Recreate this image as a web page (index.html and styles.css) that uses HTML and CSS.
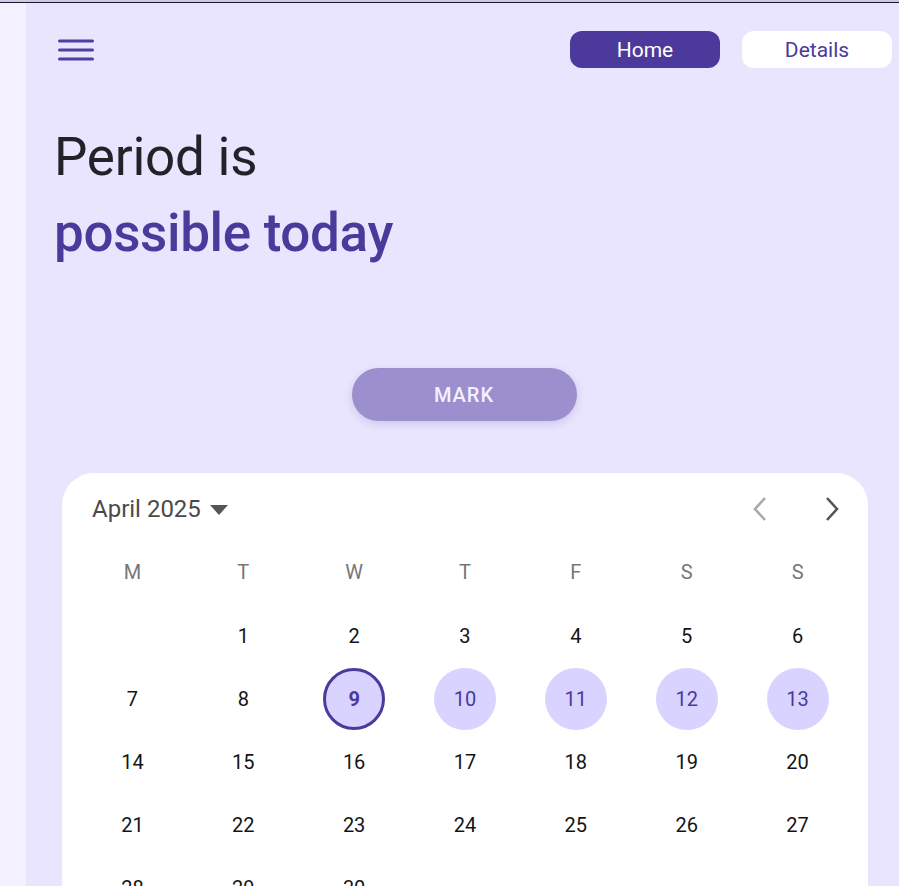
FILE: index.html
```html
<!DOCTYPE html>
<html>
<head>
<meta charset="utf-8">
<link rel="stylesheet" href="styles.css">
</head>
<body>
<div class="topline"></div>
<div class="app">
  <aside class="side"></aside>
  <main class="main">
    <header class="header">
      <svg class="menu" width="36" height="24" viewBox="0 0 36 24"><g stroke="#4e3fa0" stroke-width="3" stroke-linecap="round"><line x1="1.5" y1="3" x2="34.5" y2="3"/><line x1="1.5" y1="12" x2="34.5" y2="12"/><line x1="1.5" y1="21" x2="34.5" y2="21"/></g></svg>
      <nav class="tabs">
        <button class="tab tab-active">Home</button>
        <button class="tab">Details</button>
      </nav>
    </header>
    <h1 class="title"><span class="t1">Period is</span><span class="t2">possible today</span></h1>
    <div class="mark-wrap"><button class="mark">MARK</button></div>
    <section class="card">
      <div class="cal-head">
        <div class="month">April 2025 <svg class="caret" width="18" height="10" viewBox="0 0 18 10"><path d="M0 0H18L9 10Z" fill="#555"/></svg></div>
        <div class="navs">
          <span class="nav"><svg width="18" height="26" viewBox="0 0 18 26"><polyline points="14,2 4,13 14,24" fill="none" stroke="#a9a9a9" stroke-width="2.6"/></svg></span>
          <span class="nav"><svg width="18" height="26" viewBox="0 0 18 26"><polyline points="4,2 14,13 4,24" fill="none" stroke="#555" stroke-width="2.6"/></svg></span>
        </div>
      </div>
      <div class="grid">
        <div class="wd">M</div><div class="wd">T</div><div class="wd">W</div><div class="wd">T</div><div class="wd">F</div><div class="wd">S</div><div class="wd">S</div>
        <div class="d"></div><div class="d"><span>1</span></div><div class="d"><span>2</span></div><div class="d"><span>3</span></div><div class="d"><span>4</span></div><div class="d"><span>5</span></div><div class="d"><span>6</span></div>
        <div class="d"><span>7</span></div><div class="d"><span>8</span></div><div class="d"><span class="today">9</span></div><div class="d"><span class="hl">10</span></div><div class="d"><span class="hl">11</span></div><div class="d"><span class="hl">12</span></div><div class="d"><span class="hl">13</span></div>
        <div class="d"><span>14</span></div><div class="d"><span>15</span></div><div class="d"><span>16</span></div><div class="d"><span>17</span></div><div class="d"><span>18</span></div><div class="d"><span>19</span></div><div class="d"><span>20</span></div>
        <div class="d"><span>21</span></div><div class="d"><span>22</span></div><div class="d"><span>23</span></div><div class="d"><span>24</span></div><div class="d"><span>25</span></div><div class="d"><span>26</span></div><div class="d"><span>27</span></div>
        <div class="d"><span>28</span></div><div class="d"><span>29</span></div><div class="d"><span>30</span></div><div class="d"></div><div class="d"></div><div class="d"></div><div class="d"></div>
      </div>
    </section>
  </main>
</div>
</body>
</html>
```
FILE: styles.css
```css
html, body {
  margin: 0;
  padding: 0;
  height: 100%;
  overflow: hidden;
}
body {
  font-family: Roboto, "Noto Sans", sans-serif;
  background: #e9e5fe;
}
.topline {
  height: 2px;
  background: #cfc6ef;
  border-bottom: 1px solid #1a1a1a;
}
.app {
  display: flex;
  min-height: 883px;
}
.side {
  width: 26px;
  flex: none;
  background: #f3f1ff;
}
.main {
  flex: 1;
  background: #e9e5fe;
  min-width: 0;
}
.header {
  display: flex;
  align-items: center;
  justify-content: space-between;
  padding: 28px 7px 0 32px;
}
.menu {
  display: block;
}
.tabs {
  display: flex;
  gap: 22px;
}
.tab {
  width: 150px;
  height: 37px;
  border: none;
  border-radius: 12px;
  background: #ffffff;
  color: #4b3a9b;
  font-family: Roboto, sans-serif;
  font-size: 21px;
  padding: 0;
}
.tab-active {
  background: #4b3a9b;
  color: #ffffff;
}
.title {
  margin: 51px 0 0 28px;
  font-size: 53px;
  line-height: 76px;
  font-weight: 400;
}
.t1 {
  display: block;
  color: #232228;
  letter-spacing: -0.25px;
}
.t2 {
  display: block;
  color: #4b3a9b;
  font-weight: 500;
  letter-spacing: -0.35px;
}
.mark-wrap {
  display: flex;
  justify-content: center;
  margin: 97px 33px 0 36px;
}
.mark {
  width: 225px;
  height: 53px;
  border: none;
  border-radius: 27px;
  background: #9b90cd;
  color: #f4f1ff;
  font-family: Roboto, sans-serif;
  font-size: 20px;
  font-weight: 500;
  letter-spacing: 1px;
  padding-top: 2px;
  box-shadow: 0 3px 8px rgba(80, 60, 150, 0.18);
}
.card {
  margin: 52px 31px 0 36px;
  background: #ffffff;
  border-radius: 32px 32px 0 0;
  padding: 22px 15px 0 15px;
  height: 420px;
}
.cal-head {
  display: flex;
  align-items: center;
  justify-content: space-between;
  height: 28px;
  padding: 0 1px 0 15px;
}
.month {
  display: flex;
  align-items: center;
  gap: 9px;
  font-size: 24px;
  color: #4a4a4a;
}
.caret {
  margin-top: 1px;
}
.navs {
  display: flex;
  gap: 32px;
}
.nav {
  width: 40px;
  height: 40px;
  display: flex;
  align-items: center;
  justify-content: center;
}
.grid {
  display: grid;
  grid-template-columns: repeat(7, 1fr);
  grid-template-rows: 64px;
  grid-auto-rows: 63px;
  margin-top: 17px;
}
.wd {
  display: flex;
  align-items: center;
  justify-content: center;
  font-size: 20px;
  color: #777777;
}
.d {
  display: flex;
  align-items: center;
  justify-content: center;
  font-size: 20px;
  color: #141414;
}
.d span {
  width: 62px;
  height: 62px;
  border-radius: 50%;
  display: flex;
  align-items: center;
  justify-content: center;
  box-sizing: border-box;
}
.d .hl {
  background: #d9d4ff;
  color: #4b3a9b;
}
.d .today {
  background: #d9d4ff;
  border: 3px solid #4b3a9b;
  color: #4b3a9b;
  font-weight: 700;
}
```
